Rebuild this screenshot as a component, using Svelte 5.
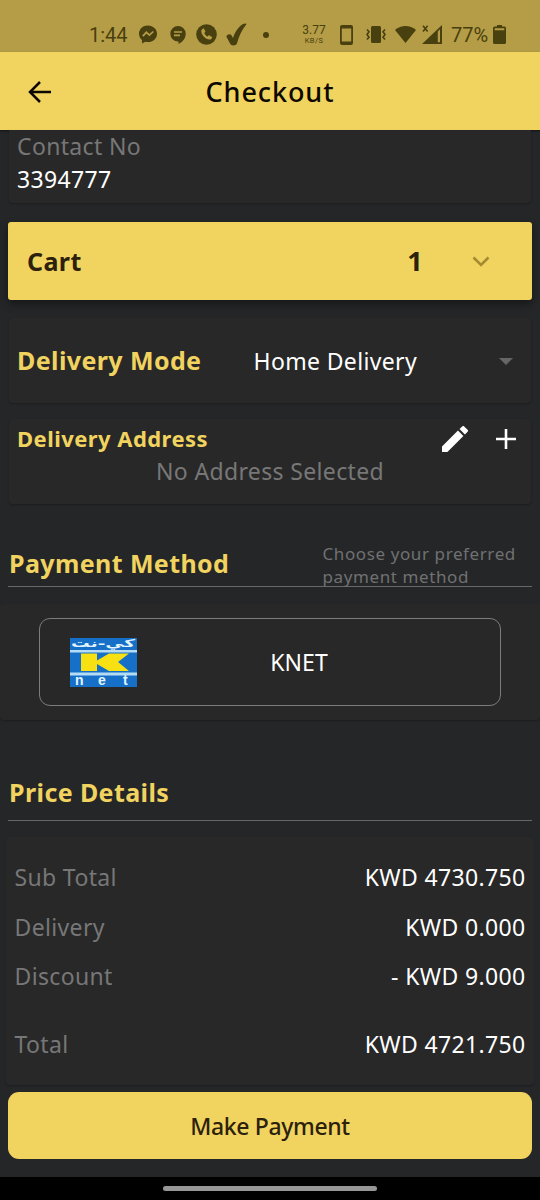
<script>
  const contact = { label: 'Contact No', value: '3394777' }
  const cartCount = 1
  const deliveryMode = 'Home Delivery'

  const prices = [
    { label: 'Sub Total', value: 'KWD 4730.750' },
    { label: 'Delivery', value: 'KWD 0.000' },
    { label: 'Discount', value: '- KWD 9.000' },
    { label: 'Total', value: 'KWD 4721.750', total: true }
  ]
</script>

<div class="screen">
  <div class="status-bar">
    <span class="status-time">1:44</span>
    <svg class="icon-messenger" width="18" height="19" viewBox="0 0 18 19">
      <path d="M9 0.5C4 0.5 0 4 0 8.8c0 2.6 1.1 4.7 3 6.1V18.5l3.2-1.8c.9.3 1.8.4 2.8.4 5 0 9-3.6 9-8.3S14 .5 9 .5z" />
      <path class="cutout-line" d="M3.8 11.2 7.4 7.3l3 2.8 3.9-3.6" />
    </svg>
    <svg class="icon-chat" width="16" height="18" viewBox="0 0 16 18">
      <path d="M8 0a7.7 7.7 0 0 0 0 15.4h.5V18c4.3-2 7.2-5.8 7.2-10.2A7.7 7.7 0 0 0 8 0z" />
      <path class="cutout-line" d="M4 6h8M4 9.3h6" />
    </svg>
    <svg class="icon-call" width="21" height="21" viewBox="0 0 21 21">
      <circle cx="10.5" cy="10.5" r="10.3" />
      <path class="cutout" d="M6.8 4.7 5.3 6.2c-.7 4.5 4.9 10 9.4 9.2l1.3-1.5c.3-.4.2-.7-.1-1l-2.4-1.5c-.4-.2-.7-.1-1 .2l-.8 1c-1.7-.7-2.9-1.9-3.5-3.5l.9-.8c.3-.3.4-.6.2-1L8 4.8c-.3-.4-.8-.5-1.2-.1z" />
    </svg>
    <svg class="icon-check" width="21" height="23" viewBox="0 0 21 23">
      <path d="M0.3 13.5c1.2-2.4 3.6-3 5.2-1.2l1.5 2.6C9 9 12.5 3.5 17 1c1.5-.8 3.8-.8 3.4.2C16 6.5 13 13 11 20.2c-.8 2.6-5.6 3-6.8.6z" />
    </svg>
    <span class="status-dot"></span>
    <span class="net-speed"><b>3.77</b><small>KB/S</small></span>
    <svg class="icon-phone" width="13" height="20" viewBox="0 0 13 20">
      <path fill-rule="evenodd" d="M2 0h9a2 2 0 0 1 2 2v16a2 2 0 0 1-2 2H2a2 2 0 0 1-2-2V2a2 2 0 0 1 2-2zm-.2 3.5v13h9.4v-13z" />
    </svg>
    <svg class="icon-vibrate" width="20" height="17" viewBox="0 0 20 17">
      <rect x="5" y="0" width="10" height="17" rx="1.5" />
      <path class="wave" d="M1 3.5l2 2.3-2 2.7 2 2.7-2 2.3M19 3.5l-2 2.3 2 2.7-2 2.7 2 2.3" />
    </svg>
    <svg class="icon-wifi" width="21" height="17" viewBox="0 0 21 17">
      <path d="M0 4C6-1.2 15-1.2 21 4L10.5 17z" />
    </svg>
    <svg class="icon-signal" width="20" height="19" viewBox="0 0 20 19">
      <path fill-rule="evenodd" d="M20 0v19H0zm-4.2 6.5v10.7H18V4.3z" />
      <path class="wave" d="M1 0.8l4.6 5.6M5.6.8 1 6.4" />
    </svg>
    <span class="status-battery">77%</span>
    <svg class="icon-battery" width="13" height="19" viewBox="0 0 13 19">
      <path fill-rule="evenodd" d="M4 0h5v1.5h2.5A1.5 1.5 0 0 1 13 3v14.5a1.5 1.5 0 0 1-1.5 1.5h-10A1.5 1.5 0 0 1 0 17.5V3a1.5 1.5 0 0 1 1.5-1.5H4zM1.7 3.3v2h9.6v-2z" />
    </svg>
  </div>

  <header class="app-bar">
    <svg class="back" width="24" height="24" viewBox="0 0 24 24">
      <path d="M12 2 2 12l10 10M2 12h21" />
    </svg>
    <h1>Checkout</h1>
  </header>

  <main>
    <section class="card contact">
      <span class="label">{contact.label}</span>
      <span class="value">{contact.value}</span>
    </section>

    <section class="cart">
      <h2>Cart</h2>
      <strong>{cartCount}</strong>
      <svg width="18" height="12" viewBox="0 0 18 12">
        <path d="M1.5 2.5 9 10l7.5-7.5" />
      </svg>
    </section>

    <section class="card mode">
      <h2>Delivery Mode</h2>
      <span class="value">{deliveryMode}</span>
      <svg width="14" height="8" viewBox="0 0 14 8">
        <path d="M0 1h14L7 8z" />
      </svg>
    </section>

    <section class="card address">
      <div class="address__head">
        <h3>Delivery Address</h3>
        <svg class="edit" width="26" height="26" viewBox="3 3 18 18">
          <path d="M3 17.25V21h3.75L17.81 9.94l-3.75-3.75L3 17.25zM20.71 7.04a1 1 0 0 0 0-1.41l-2.34-2.34a1 1 0 0 0-1.41 0l-1.83 1.83 3.75 3.75 1.83-1.83z" />
        </svg>
        <svg class="add" width="20" height="20" viewBox="0 0 20 20">
          <path d="M10 0v20M0 10h20" />
        </svg>
      </div>
      <p class="label">No Address Selected</p>
    </section>

    <div class="heading heading--payment">
      <h2>Payment Method</h2>
      <p>Choose your preferred payment method</p>
    </div>

    <section class="payment">
      <div class="method">
        <svg class="knet" width="67" height="49" viewBox="0 0 67 49">
          <rect width="67" height="49" fill="#1670c8" />
          <text class="knet__arabic" x="1" y="8.5" textLength="64" lengthAdjust="spacingAndGlyphs" direction="ltr">كي-نت</text>
          <path fill="#b4dcf5" d="M0 12h67v2.5H0zM0 34.5h67v3H0z" />
          <path fill="#f8e112" d="M11 15.5h16v7l12-7h20l-11 8.500 11 9H39l-12-7v7H11z" />
          <text class="knet__latin" x="5" y="47">n</text>
          <text class="knet__latin" x="28" y="47">e</text>
          <text class="knet__latin" x="53" y="47">t</text>
        </svg>
        <span class="value">KNET</span>
      </div>
    </section>

    <div class="heading heading--price">
      <h2>Price Details</h2>
    </div>

    <section class="prices">
      {#each prices as row (row.label)}
        <div class="price" class:price--total={row.total}>
          <span class="label">{row.label}</span>
          <span class="value">{row.value}</span>
        </div>
      {/each}
    </section>

    <button class="pay">Make Payment</button>
  </main>

  <div class="nav-bar"><span></span></div>
</div>

<style>
  :global(body) {
    background: #252628;
  }

  .screen {
    width: 540px;
    height: 1200px;
    display: flex;
    flex-direction: column;
    overflow: hidden;
    background: #252628;
    color: #fff;
    font-family: 'Noto Sans', sans-serif;
    font-size: 23px;
    letter-spacing: 0.35px;
  }

  h1,
  h2,
  h3,
  p {
    margin: 0;
  }

  svg {
    display: block;
    flex: none;
  }

  .label {
    color: #777;
  }

  .value {
    color: #fff;
  }

  h2 {
    font-size: 25px;
    font-weight: 700;
    letter-spacing: 0.4px;
    color: #f1d35f;
  }

  .status-bar {
    flex: none;
    height: 52px;
    box-sizing: border-box;
    display: flex;
    align-items: center;
    padding: 17px 0 0 89px;
    background: #b49d46;
    color: #49400f;
    fill: #49400f;
    font-family: Roboto, sans-serif;
    font-size: 20px;
    letter-spacing: 0;
  }

  .status-time {
    width: 50px;
  }

  .cutout {
    fill: #b49d46;
  }

  .cutout-line {
    fill: none;
    stroke: #b49d46;
    stroke-width: 1.7;
  }

  .wave {
    fill: none;
    stroke: #49400f;
    stroke-width: 1.6;
  }

  .icon-chat {
    margin-left: 13px;
  }

  .icon-call {
    margin-left: 10px;
  }

  .icon-check {
    margin-left: 9px;
  }

  .status-dot {
    width: 6px;
    height: 6px;
    margin-left: 16px;
    border-radius: 50%;
    background: #49400f;
  }

  .net-speed {
    width: 24px;
    margin-left: 33px;
    display: flex;
    flex-direction: column;
    align-items: center;
  }

  .net-speed b {
    font-size: 12px;
    font-weight: 400;
    line-height: 12px;
  }

  .net-speed small {
    font-size: 7.5px;
    letter-spacing: 0.4px;
    line-height: 9px;
  }

  .icon-phone {
    margin-left: 14px;
  }

  .icon-vibrate {
    margin-left: 13px;
  }

  .icon-wifi {
    margin-left: 9px;
  }

  .icon-signal {
    margin-left: 6px;
  }

  .status-battery {
    width: 42px;
    margin-left: 9px;
  }

  .app-bar {
    flex: none;
    height: 78px;
    box-sizing: border-box;
    padding: 2px 28px 0;
    display: flex;
    align-items: center;
    background: #f1d35f;
    color: #0d0900;
    box-shadow: 0 1px 2px rgba(0, 0, 0, 0.5);
  }

  .back {
    fill: none;
    stroke: #0d0900;
    stroke-width: 2.5;
  }

  h1 {
    flex: 1;
    margin: -2px 24px 0 0;
    text-align: center;
    font-size: 27px;
    font-weight: 500;
    letter-spacing: 0.9px;
  }

  main {
    flex: 1;
    display: flex;
    flex-direction: column;
  }

  .card {
    margin: 0 9px;
    box-sizing: border-box;
    border-radius: 4px;
    background: #282828;
    box-shadow: 0 1px 2px rgba(0, 0, 0, 0.25);
  }

  .contact {
    height: 73px;
    padding-left: 8px;
    display: flex;
    flex-direction: column;
    line-height: 33px;
    border-radius: 0 0 4px 4px;
  }

  .cart {
    height: 78px;
    margin: 19px 8px 0;
    padding: 0 42px 0 19px;
    box-sizing: border-box;
    display: flex;
    align-items: center;
    border-radius: 3px;
    background: #f1d35f;
    color: #2b210c;
    box-shadow: 0 4px 8px rgba(0, 0, 0, 0.4);
  }

  .cart h2 {
    flex: 1;
    color: inherit;
  }

  .cart strong {
    margin-right: 49px;
    font-size: 27px;
    line-height: 30px;
  }

  .cart svg {
    fill: none;
    stroke: #a48b32;
    stroke-width: 2.5;
  }

  .mode {
    height: 85px;
    margin-top: 18px;
    padding: 0 18px 0 8px;
    display: flex;
    align-items: center;
  }

  .mode h2 {
    width: 236.5px;
    line-height: 34px;
    padding-bottom: 2px;
  }

  .mode .value {
    flex: 1;
  }

  .mode svg {
    fill: #666;
  }

  .address {
    height: 85px;
    margin-top: 16px;
    padding: 0 15px 0 8px;
  }

  .address__head {
    height: 36px;
    padding-top: 2px;
    display: flex;
    align-items: center;
  }

  h3 {
    flex: 1;
    padding-bottom: 2px;
    color: #f1d35f;
    font-size: 22px;
    font-weight: 700;
    letter-spacing: 0.45px;
  }

  .edit {
    fill: #fff;
  }

  .add {
    margin-left: 28px;
    fill: none;
    stroke: #fff;
    stroke-width: 2.6;
  }

  .address p {
    margin-right: -7px;
    line-height: 28px;
    text-align: center;
  }

  .heading {
    margin: 0 8px;
    padding-left: 1px;
    box-sizing: border-box;
    display: flex;
    border-bottom: 1px solid #666768;
  }

  .heading h2 {
    line-height: 34px;
  }

  .heading--payment {
    height: 45px;
    margin-top: 38px;
  }

  .heading--payment h2 {
    width: 313.5px;
    padding-top: 4px;
  }

  .heading--payment p {
    width: 205px;
    color: #707172;
    font-size: 17px;
    line-height: 23px;
    letter-spacing: 0.6px;
  }

  .payment {
    height: 116px;
    margin-top: 17px;
    padding: 14px 39px;
    box-sizing: border-box;
    background: #282828;
    border-radius: 4px;
    box-shadow: 0 1px 2px rgba(0, 0, 0, 0.25);
  }

  .method {
    height: 88px;
    padding: 0 30px;
    box-sizing: border-box;
    display: flex;
    align-items: center;
    border: 1px solid #7c7c7c;
    border-radius: 11px;
  }

  .method .value {
    flex: 1;
    margin-right: 9px;
    padding-bottom: 1px;
    text-align: center;
    letter-spacing: 0.1px;
  }

  .knet__arabic {
    fill: #e2f4ff;
    font: 700 11px 'DejaVu Sans', sans-serif;
  }

  .knet__latin {
    fill: #e2f4ff;
    font: 700 14px 'Liberation Sans', sans-serif;
  }

  .heading--price {
    height: 46px;
    margin-top: 55px;
  }

  .prices {
    height: 248px;
    margin: 16px 6px 0;
    padding: 15.5px 8.5px 0;
    box-sizing: border-box;
    border-radius: 4px;
    background: #282828;
    box-shadow: 0 1px 2px rgba(0, 0, 0, 0.25);
  }

  .price {
    height: 49.5px;
    display: flex;
    align-items: center;
    justify-content: space-between;
  }

  .price--total {
    margin-top: 18px;
  }

  .pay {
    height: 67px;
    margin: 7px 8px 0;
    padding: 0;
    border: 0;
    border-radius: 11px;
    background: #f1d35f;
    color: #2b210c;
    font: 500 23px 'Noto Sans', sans-serif;
    letter-spacing: -0.35px;
  }

  .nav-bar {
    flex: none;
    height: 23px;
    display: flex;
    justify-content: center;
    align-items: center;
    background: #000;
  }

  .nav-bar span {
    width: 214px;
    height: 5px;
    border-radius: 3px;
    background: #969696;
  }
</style>
